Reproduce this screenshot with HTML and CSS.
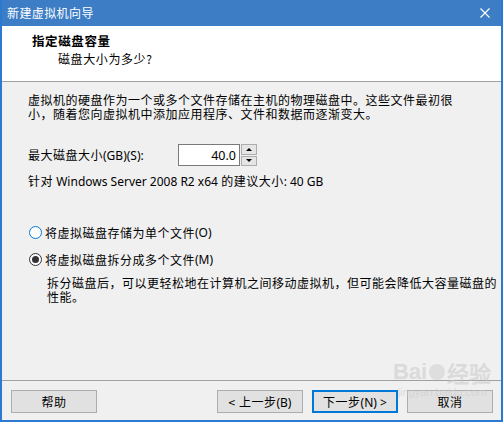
FILE: index.html
```html
<!DOCTYPE html>
<html lang="zh-CN">
<head>
    <meta charset="UTF-8">
    <title>新建虚拟机向导</title>
    <link rel="stylesheet" href="styles.css">
</head>
<body>
<div class="window">
    <div class="titlebar">
        <span class="title">新建虚拟机向导</span>
        <svg class="close" width="10" height="10" viewBox="0 0 10 10">
            <path d="M0.5 0.5 L9.5 9.5 M9.5 0.5 L0.5 9.5" stroke="#fff" stroke-width="1.2" fill="none"/>
        </svg>
    </div>

    <div class="header">
        <div class="head-title">指定磁盘容量</div>
        <div class="head-sub">磁盘大小为多少?</div>
    </div>

    <div class="content">
        <p class="intro">虚拟机的硬盘作为一个或多个文件存储在主机的物理磁盘中。这些文件最初很<br>小，随着您向虚拟机中添加应用程序、文件和数据而逐渐变大。</p>

        <div class="size-row">
            <label for="size">最大磁盘大小<span class="latin">(GB)(S):</span></label>
            <div class="spin">
                <input id="size" type="text" value="40.0">
                <div class="spin-btns">
                    <span class="spin-btn"><i class="arrow up"></i></span>
                    <span class="spin-btn"><i class="arrow down"></i></span>
                </div>
            </div>
        </div>

        <p class="hint">针对 <span class="latin">Windows Server 2008 R2 x64</span> 的建议大小<span class="latin">: 40 GB</span></p>

        <ul class="options">
            <li class="option"><span class="radio focus"></span>将虚拟磁盘存储为单个文件<span class="latin">(O)</span></li>
            <li class="option"><span class="radio checked"></span>将虚拟磁盘拆分成多个文件<span class="latin">(M)</span></li>
        </ul>
        <p class="desc">拆分磁盘后，可以更轻松地在计算机之间移动虚拟机，但可能会降低大容量磁盘的<br>性能。</p>
    </div>

    <div class="footer">
        <button class="btn">帮助</button>
        <div class="spacer"></div>
        <button class="btn">&lt; 上一步<span class="latin">(B)</span></button>
        <button class="btn default">下一步<span class="latin">(N) &gt;</span></button>
        <button class="btn">取消</button>
    </div>

    <div class="watermark">
        <span class="wm-logo">Bai<span class="paw"></span>经验</span>
        <span class="wm-url">jingyan.baidu.com</span>
    </div>
</div>
</body>
</html>
```

FILE: styles.css
```css
* {
    box-sizing: border-box;
}
body {
    margin: 0;
    font-family: "Noto Sans CJK SC", "Noto Sans", sans-serif;
    font-size: 12px;
    color: #000;
    background: #fff;
}
.window {
    position: relative;
    width: 503px;
    height: 422px;
    background: #f0f0f0;
    border: 2px solid #2b79d0;
    border-top: 0;
    display: flex;
    flex-direction: column;
    overflow: hidden;
}
.latin {
    font-family: "Noto Sans", "Noto Sans CJK SC", sans-serif;
    letter-spacing: 0;
}

/* title bar */
.titlebar {
    height: 26px;
    margin: 0 -2px;
    padding: 0 13px 0 7px;
    background: #3c7dc6;
    color: #fff;
    display: flex;
    align-items: center;
    justify-content: space-between;
    letter-spacing: 0.4px;
}
.title {
    margin-top: -1px;
}

/* header */
.header {
    height: 56px;
    background: #fff;
    border-bottom: 1px solid #a0a0a0;
    padding: 7px 0 0 30px;
    letter-spacing: 0.6px;
}
.head-title {
    font-weight: bold;
    line-height: 15px;
    font-size: 12.5px;
}
.head-sub {
    margin: 3px 0 0 26px;
    line-height: 15px;
}

/* body */
.content {
    flex: 1;
    padding: 11px 0 0 26px;
    letter-spacing: 0.5px;
}
.intro, .hint, .desc {
    margin: 0;
    line-height: 14px;
}
.size-row {
    margin-top: 23px;
    height: 22px;
    display: flex;
    align-items: center;
}
.size-row label {
    width: 150px;
}
.spin {
    display: flex;
    height: 22px;
}
.spin input {
    width: 62px;
    height: 22px;
    border: 1px solid #7a7a7a;
    background: #fff;
    text-align: right;
    padding: 0 3px 0 0;
    font-family: "Noto Sans", sans-serif;
    font-size: 12.5px;
    outline: none;
}
.spin-btns {
    display: flex;
    flex-direction: column;
    gap: 1px;
    margin-left: 1px;
    width: 16px;
}
.spin-btn {
    flex: 1;
    background: #e5e5e5;
    border: 1px solid #adadad;
    display: flex;
    align-items: center;
    justify-content: center;
}
.arrow {
    width: 0;
    height: 0;
    border-left: 3px solid transparent;
    border-right: 3px solid transparent;
}
.arrow.up {
    border-bottom: 3px solid #000;
}
.arrow.down {
    border-top: 3px solid #000;
}
.hint {
    margin-top: 8px;
}
.options {
    list-style: none;
    margin: 35px 0 0;
    padding: 0;
}
.option {
    height: 16px;
    display: flex;
    align-items: center;
    margin-bottom: 11px;
}
.option:last-child {
    margin-bottom: 0;
}
.radio {
    width: 13px;
    height: 13px;
    border: 1px solid #333;
    border-radius: 50%;
    background: #fff;
    margin: 0 3px 0 1px;
    display: flex;
    align-items: center;
    justify-content: center;
}
.radio.focus {
    border-color: #0078d7;
}
.radio.checked::after {
    content: "";
    width: 7px;
    height: 7px;
    border-radius: 50%;
    background: #333;
}
.desc {
    margin: 9px 0 0 19px;
}

/* footer */
.footer {
    height: 40px;
    border-top: 1px solid #a0a0a0;
    padding: 9px 8px 0 9px;
    display: flex;
    align-items: flex-start;
    gap: 9px;
}
.spacer {
    flex: 1;
}
.btn {
    width: 86px;
    height: 23px;
    background: #e1e1e1;
    border: 1px solid #adadad;
    font-family: "Noto Sans CJK SC", "Noto Sans", sans-serif;
    font-size: 12px;
    letter-spacing: 0.5px;
    padding: 0;
    color: #000;
}
.btn.default {
    border: 2px solid #0078d7;
}

/* watermark on top of the shot */
.watermark {
    position: absolute;
    right: 4px;
    bottom: 22px;
    width: 110px;
    color: rgba(200, 200, 200, 0.55);
    font-family: "Liberation Sans", sans-serif;
    display: flex;
    flex-direction: column;
    align-items: center;
    pointer-events: none;
}
.wm-logo {
    font-size: 22px;
    font-weight: bold;
    display: flex;
    align-items: center;
}
.paw {
    display: inline-block;
    width: 16px;
    height: 16px;
    margin: 0 2px;
    border-radius: 50%;
    background: rgba(200, 200, 200, 0.45);
}
.wm-url {
    font-size: 11px;
    margin-top: -2px;
}
```
